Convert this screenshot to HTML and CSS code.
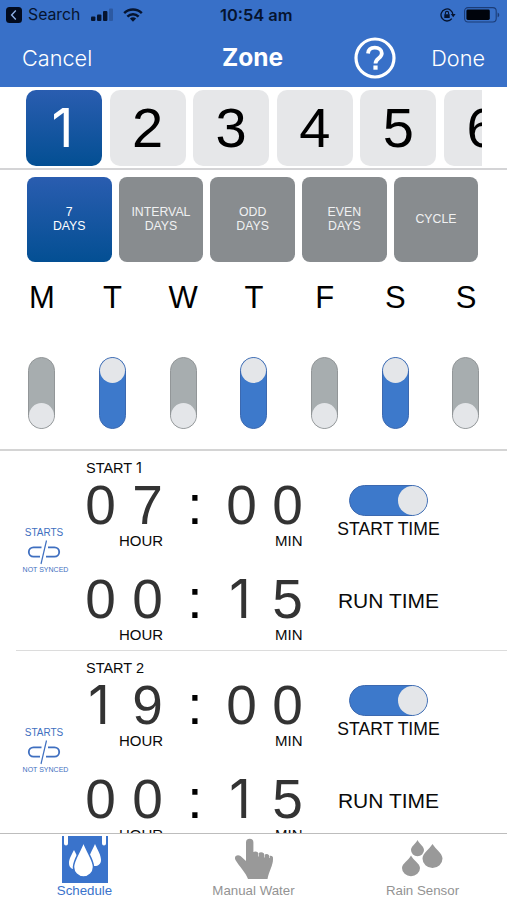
FILE: index.html
```html
<!DOCTYPE html>
<html lang="en">

<head>
    <meta charset="utf-8">
    <title>Zone</title>
    <link rel="stylesheet" href="styles.css">
</head>

<body>
    <header>
        <div class="status">
            <div class="status-left">
                <svg width="16" height="16" viewBox="0 0 16 16"><rect width="16" height="16" rx="3.5" fill="#020b1e"/><path d="M9.8 3.6 5.6 8l4.2 4.4" fill="none" stroke="#8fb0e4" stroke-width="1.4"/></svg>
                <span class="back">Search</span>
                <svg class="signal" width="23" height="14" viewBox="0 0 23 14"><rect y="8.5" width="4.4" height="4.5" rx="1"/><rect x="6" y="6.5" width="4.4" height="6.500" rx="1"/><rect x="12" y="3" width="4.400" height="10" rx="1"/><rect x="18" y="0.5" width="4" height="12.5" rx="1" opacity=".25"/></svg>
                <svg class="wifi" width="20" height="14" viewBox="0 0 20 14"><path d="M1.2 5.2a12.6 12.6 0 0 1 17.6 0M4.4 8.6a8 8 0 0 1 11.2 0" fill="none" stroke="#06142f" stroke-width="2.5"/><path d="M6.9 10.6a4.6 4.6 0 0 1 6.2 0L10 13.8z"/></svg>
            </div>
            <span class="clock">10:54 am</span>
            <div class="status-right">
                <svg width="16" height="14" viewBox="0 0 16 14"><path d="M11.8 10.6A6 6 0 1 1 13 7" fill="none" stroke="#06142f" stroke-width="1.3"/><path d="M10.8 6h4.8l-2.4 3.2zM4.3 6.2h5.4v3.9H4.3z"/><path d="M5.4 6.4V5a1.6 1.6 0 0 1 3.2 0v1.4" fill="none" stroke="#06142f" stroke-width="1.1"/></svg>
                <svg width="36" height="16" viewBox="0 0 36 16"><rect x=".6" y=".6" width="31.6" height="14.4" rx="3.4" fill="none" stroke="#1b3c77" stroke-width="1.1"/><rect x="2.4" y="2.6" width="23.4" height="10.4" rx="1.4" fill="#00040c"/><path d="M33.6 5.4c2.2.8 2.2 4 0 4.8z" fill="#1b3c77"/></svg>
            </div>
        </div>
        <nav>
            <a class="cancel">Cancel</a>
            <h1>Zone</h1>
            <svg class="help" width="42" height="42" viewBox="0 0 42 42"><circle cx="21" cy="21" r="19" fill="none" stroke="#fff" stroke-width="3.2"/><path d="M14 16.500c.3-4.200 3.200-5.800 6.800-5.800 4 0 7 2 7 5.600 0 5-6.300 4.900-6.300 10.200" fill="none" stroke="#fff" stroke-width="3.8"/><rect x="19.400" y="28.500" width="4.200" height="4.200" fill="#fff"/></svg>
            <a class="done">Done</a>
        </nav>
    </header>

    <section class="zones">
        <div class="zone-list">
            <div class="zone active one">1</div>
            <div class="zone">2</div>
            <div class="zone">3</div>
            <div class="zone">4</div>
            <div class="zone">5</div>
            <div class="zone">6</div>
        </div>
    </section>

    <section class="days">
        <div class="modes">
            <div class="mode active">7<br>DAYS</div>
            <div class="mode">INTERVAL<br>DAYS</div>
            <div class="mode">ODD<br>DAYS</div>
            <div class="mode">EVEN<br>DAYS</div>
            <div class="mode">CYCLE</div>
        </div>
        <div class="week">
            <div class="day">M<div class="toggle"></div></div>
            <div class="day">T<div class="toggle on"></div></div>
            <div class="day">W<div class="toggle"></div></div>
            <div class="day">T<div class="toggle on"></div></div>
            <div class="day">F<div class="toggle"></div></div>
            <div class="day">S<div class="toggle on"></div></div>
            <div class="day">S<div class="toggle"></div></div>
        </div>
    </section>

    <main>
        <section class="start">
            <div class="sync">
                <span class="sync-top">STARTS</span>
                <svg width="34" height="26" viewBox="0 0 34 26"><path d="M14.500 8.300H6.500a4.700 4.700 0 0 0 0 9.400H13M21 8.300h6.500a4.700 4.700 0 0 1 0 9.400H19" fill="none" stroke="#3f6fc0" stroke-width="1.800"/><path d="M19.500 1.500 14 25" stroke="#3f6fc0" stroke-width="1.200"/></svg>
                <span class="sync-bottom">NOT SYNCED</span>
            </div>
            <div class="times">
                <h2>START <span class="one">1</span></h2>
                <div class="time"><span>0</span><span>7</span><b>:</b><span>0</span><span>0</span></div>
                <div class="units"><span class="hour">HOUR</span><span class="min">MIN</span></div>
                <div class="time"><span>0</span><span>0</span><b>:</b><span class="one">1</span><span>5</span></div>
                <div class="units"><span class="hour">HOUR</span><span class="min">MIN</span></div>
            </div>
            <div class="labels">
                <div class="switch"></div>
                <span class="start-label">START TIME</span>
                <span class="run-label">RUN TIME</span>
            </div>
        </section>
        <section class="start">
            <div class="sync">
                <span class="sync-top">STARTS</span>
                <svg width="34" height="26" viewBox="0 0 34 26"><path d="M14.500 8.300H6.500a4.700 4.700 0 0 0 0 9.400H13M21 8.300h6.500a4.700 4.700 0 0 1 0 9.400H19" fill="none" stroke="#3f6fc0" stroke-width="1.800"/><path d="M19.500 1.500 14 25" stroke="#3f6fc0" stroke-width="1.200"/></svg>
                <span class="sync-bottom">NOT SYNCED</span>
            </div>
            <div class="times">
                <h2>START 2</h2>
                <div class="time"><span class="one">1</span><span>9</span><b>:</b><span>0</span><span>0</span></div>
                <div class="units"><span class="hour">HOUR</span><span class="min">MIN</span></div>
                <div class="time"><span>0</span><span>0</span><b>:</b><span class="one">1</span><span>5</span></div>
                <div class="units"><span class="hour">HOUR</span><span class="min">MIN</span></div>
            </div>
            <div class="labels">
                <div class="switch"></div>
                <span class="start-label">START TIME</span>
                <span class="run-label">RUN TIME</span>
            </div>
        </section>
    </main>

    <footer>
        <div class="tab active">
            <svg width="46" height="47" viewBox="0 0 46 47"><path fill="#3a73cb" d="M0 0h46v47H0z"/><path fill="#fff" d="M2 0h4v7.500q0 2-2 2t-2-2zM40 0h4v7.500q0 2-2 2t-2-2z"/><path fill="#fff" d="M12 14c3 6 5 9 5 13 0 8-10 8-10 0 0-4 2-7 5-13zM33 8c3 7 6 11 6 16 0 8-12 8-12 0 0-5 3-9 6-16z"/><path fill="#fff" stroke="#3a73cb" stroke-width="1.500" d="M21.500 6c4 11 10 18 10 25a10 10 0 0 1-20 0c0-7 6-14 10-25z"/></svg>
            <span>Schedule</span>
        </div>
        <div class="tab">
            <svg width="46" height="47" viewBox="0 0 46 47"><path fill="#999" d="M15 6.500a3.700 3.700 0 0 1 7.400 0V16q2.200-1.400 4.600.6v4h.6v-3.600q3-1.600 5.400.6v4h.6v-3.200q2.800-1.200 4.400.8V22h.6v-2.200q3-.6 3.400 1.600c.5 8-4 13-5.500 21.600H17C15 37 8 30 4.500 24c-2-4 2-6 5-4l5.500 5z"/></svg>
            <span>Manual Water</span>
        </div>
        <div class="tab">
            <svg width="46" height="47" viewBox="0 0 46 47"><path fill="#999" d="M17.500 4c2 4 6.500 6.500 6.500 10a6.500 6.200 0 0 1-13 0c0-3.500 4.500-6 6.500-10zM32.500 8c3 5 10 9.500 10 14.500a10 9.500 0 0 1-20 0c0-5 7-9.500 10-14.500zM11 19.500c2.500 5 9 8 9 12.500a9 8.300 0 0 1-18 0c0-4.500 6.500-7.500 9-12.500z"/></svg>
            <span>Rain Sensor</span>
        </div>
    </footer>
</body>

</html>
```
FILE: styles.css
```css
* {
    margin: 0;
    padding: 0;
    box-sizing: border-box;
}

body {
    width: 507px;
    height: 900px;
    display: flex;
    flex-direction: column;
    overflow: hidden;
    background-color: #fff;
    color: #0a0a0a;
    font-family: "Liberation Sans", Arial, sans-serif;
}

svg {
    display: block;
    flex: none;
}

/* header */
header {
    height: 87px;
    flex: none;
    background-color: #3870c8;
    font-family: Inter, sans-serif;
}

.status {
    height: 29px;
    display: grid;
    grid-template-columns: 214px auto 1fr;
    align-items: center;
    padding: 0 7px 0 6px;
    color: #06142f;
    fill: #06142f;
}

.status-left,
.status-right {
    display: flex;
    align-items: center;
}

.status-right {
    justify-content: flex-end;
    gap: 8px;
}

.back {
    margin: 0 11px 0 6px;
    font-size: 15.8px;
}

.wifi {
    margin-left: 9px;
}

.clock {
    font-size: 16.4px;
    font-weight: 600;
}

nav {
    height: 57px;
    display: grid;
    grid-template-columns: 200px 107px 1fr auto;
    align-items: center;
    padding: 0 22px;
    color: #fff;
}

.cancel,
.done {
    font-size: 21.7px;
    font-weight: 350;
}

h1 {
    padding-bottom: 2px;
    font-size: 24.5px;
    font-weight: 700;
}

.help {
    margin-left: 25px;
}

/* zone picker */
.zones {
    height: 83px;
    flex: none;
    padding: 3px 25px 0 26px;
    border-bottom: 2px solid #d4d4d6;
}

.zone-list {
    display: flex;
    gap: 7.6px;
    overflow: hidden;
}

.zone {
    width: 76px;
    height: 76px;
    flex: none;
    border-radius: 10px;
    background-color: #e6e7e9;
    color: #000;
    font-size: 56px;
    line-height: 76px;
    text-align: center;
}

.zone.active,
.mode.active {
    background: linear-gradient(#2a5db0, #034f93);
    color: #fff;
}

.one {
    font-family: Inter, sans-serif;
}

.zone.one {
    padding-right: 3px;
    font-size: 54px;
}

/* weekdays */
.days {
    height: 281px;
    flex: none;
    padding-top: 7px;
    border-bottom: 2px solid #d4d4d4;
}

.modes {
    display: flex;
    gap: 7.2px;
    padding-left: 27px;
}

.mode {
    width: 84.5px;
    height: 85px;
    display: flex;
    align-items: center;
    justify-content: center;
    border-radius: 8px;
    background-color: #888c8f;
    color: #f0f1f2;
    font-size: 12.3px;
    line-height: 13.5px;
    text-align: center;
}

.week {
    display: grid;
    grid-template-columns: repeat(7, 70.7px);
    padding: 18px 0 0 6.5px;
}

.day {
    display: flex;
    flex-direction: column;
    align-items: center;
    color: #000;
    font-size: 31px;
    line-height: 36px;
}

.toggle {
    width: 27px;
    height: 72px;
    display: flex;
    align-items: flex-end;
    margin-top: 41px;
    border: 1px solid #929698;
    border-radius: 14px;
    background-color: #a7adaf;
}

.toggle::before,
.switch::before {
    content: "";
    width: 25px;
    height: 25px;
    border-radius: 50%;
    background-color: #e4e6e9;
}

.toggle.on {
    align-items: flex-start;
    border-color: #3c69b0;
    background-color: #3d79cb;
}

/* start times */
main {
    flex: 1;
    min-height: 0;
    overflow: hidden;
}

.start {
    height: 200px;
    display: grid;
    grid-template-columns: 60px 234px 134px;
    margin-left: 16px;
    border-bottom: 1px solid #dcdcdc;
}

.sync {
    display: flex;
    flex-direction: column;
    align-items: center;
    padding: 76px 4px 0 0;
    color: #3f6fc0;
}

.sync-top {
    font-size: 10px;
    line-height: 12px;
}

.sync-bottom {
    padding-left: 3px;
    font-size: 7px;
    line-height: 10px;
    white-space: nowrap;
}

h2 {
    height: 23px;
    padding-left: 10px;
    font-size: 14.5px;
    font-weight: 400;
    line-height: 34px;
}

.time {
    height: 62px;
    display: grid;
    grid-template-columns: 47px 47px 48px 45px 47px;
    padding-left: 1px;
    color: #333;
    font-size: 55px;
    line-height: 62px;
    text-align: center;
}

.time .one {
    padding-right: 3px;
    font-size: 53px;
}

.time b {
    color: #000;
    font-weight: 400;
}

.units {
    height: 32px;
    display: flex;
    font-size: 15px;
    line-height: 9px;
}

.hour {
    width: 156px;
    padding-left: 43px;
}

.min {
    padding-left: 43px;
}

.labels {
    display: flex;
    flex-direction: column;
    align-items: center;
    padding: 34px 0 0 23px;
    white-space: nowrap;
}

.switch {
    width: 79px;
    height: 31px;
    display: flex;
    justify-content: flex-end;
    border: 1px solid #3c69b0;
    border-radius: 16px;
    background-color: #3d79cb;
}

.switch::before {
    width: 29px;
    height: 29px;
}

.start-label {
    margin-top: 2px;
    font-size: 17.6px;
    line-height: 22px;
}

.run-label {
    margin-top: 49px;
    font-size: 21px;
    line-height: 24px;
}

/* tab bar */
footer {
    height: 67px;
    flex: none;
    display: grid;
    grid-template-columns: repeat(3, 1fr);
    padding-top: 2px;
    border-top: 1px solid #bdbdbd;
}

.tab {
    display: flex;
    flex-direction: column;
    align-items: center;
    color: #939393;
    font-size: 13.3px;
    line-height: 16px;
}

.tab.active {
    color: #3a73cb;
}
```
